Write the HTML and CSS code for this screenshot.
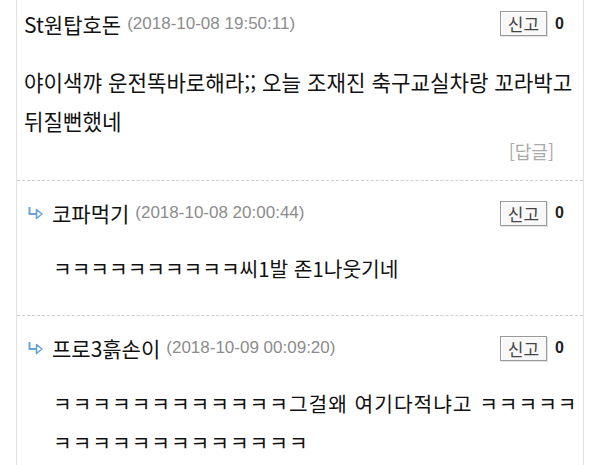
FILE: index.html
```html
<!DOCTYPE html>
<html lang="ko">
<head>
    <meta charset="UTF-8">
    <meta name="viewport" content="width=device-width, initial-scale=1.0">
    <title>댓글</title>
    <link rel="stylesheet" href="styles.css">
</head>
<body>

    <div class="board">

        <!-- comment -->
        <div class="comment">
            <div class="head">
                <span class="name">St원탑호돈</span>
                <span class="date">(2018-10-08 19:50:11)</span>
                <span class="report">신고</span>
                <span class="count">0</span>
            </div>
            <p class="text">야이색꺄 운전똑바로해라;; 오늘 조재진 축구교실차랑 꼬라박고 뒤질뻔했네</p>
            <div class="reply-link">[답글]</div>
        </div>

        <!-- replies -->
        <div class="comment reply">
            <div class="head">
                <svg class="arrow" width="16" height="14" viewBox="0 0 16 14">
                    <path d="M1.5 1 V8 H8" fill="none" stroke="#6aa3d8" stroke-width="2"/>
                    <polygon points="8.5,3.5 14,8 8.5,12.5" fill="none" stroke="#6aa3d8" stroke-width="1.6" stroke-linejoin="round"/>
                </svg>
                <span class="name">코파먹기</span>
                <span class="date">(2018-10-08 20:00:44)</span>
                <span class="report">신고</span>
                <span class="count">0</span>
            </div>
            <p class="text">ㅋㅋㅋㅋㅋㅋㅋㅋㅋㅋ씨1발 존1나웃기네</p>
        </div>

        <div class="comment reply">
            <div class="head">
                <svg class="arrow" width="16" height="14" viewBox="0 0 16 14">
                    <path d="M1.5 1 V8 H8" fill="none" stroke="#6aa3d8" stroke-width="2"/>
                    <polygon points="8.5,3.5 14,8 8.5,12.5" fill="none" stroke="#6aa3d8" stroke-width="1.6" stroke-linejoin="round"/>
                </svg>
                <span class="name">프로3흙손이</span>
                <span class="date">(2018-10-09 00:09:20)</span>
                <span class="report">신고</span>
                <span class="count">0</span>
            </div>
            <p class="text wide">ㅋㅋㅋㅋㅋㅋㅋㅋㅋㅋㅋㅋ그걸왜 여기다적냐고 ㅋㅋㅋㅋㅋㅋㅋㅋㅋㅋㅋㅋㅋㅋㅋㅋㅋㅋ</p>
        </div>

    </div>

</body>
</html>
```

FILE: styles.css
```css
* {
    margin: 0;
    padding: 0;
    box-sizing: border-box;
}
body {
    background-color: #fff;
    font-family: "Noto Sans CJK KR", "Liberation Sans", sans-serif;
    color: #111;
    overflow: hidden;
}
.board {
    margin-left: 16px;
    width: 568px;
    min-height: 465px;
    border-left: 1px solid #e2e2e2;
    border-right: 1px solid #e2e2e2;
}
.comment {
    padding: 0 2px 18px 7px;
    border-bottom: 1px dashed #cfcfcf;
}
.head {
    display: flex;
    align-items: center;
    height: 47px;
    padding-right: 17px;
}
.name {
    font-size: 21px;
    line-height: 26px;
}
.date {
    margin-left: 6px;
    font-family: "Liberation Sans", sans-serif;
    font-size: 17px;
    color: #8c8c8c;
}
.report {
    margin-left: auto;
    width: 47px;
    height: 25px;
    display: flex;
    justify-content: center;
    align-items: center;
    border: 1px solid #999;
    background-color: #f8f8f8;
    box-shadow: inset 1px 1px 0 #fff, 1px 1px 0 #e4e4e4;
    font-size: 17px;
    color: #444;
}
.count {
    margin-left: 8px;
    width: 9px;
    font-family: "Liberation Sans", sans-serif;
    font-size: 16px;
    font-weight: bold;
    color: #222;
}
.text {
    margin-top: 15px;
    font-size: 21.2px;
    line-height: 39px;
}
.reply-link {
    padding-right: 27px;
    text-align: right;
    font-size: 18px;
    line-height: 22px;
    color: #aaa;
}
.reply {
    padding: 17px 2px 27px 11px;
}
.reply .head {
    height: 30px;
}
.arrow {
    margin-right: 8px;
}
.reply .text {
    margin-top: 21px;
    padding-left: 25px;
    font-size: 20.3px;
    line-height: 39px;
}
.reply .wide {
    letter-spacing: 1px;
}
```
